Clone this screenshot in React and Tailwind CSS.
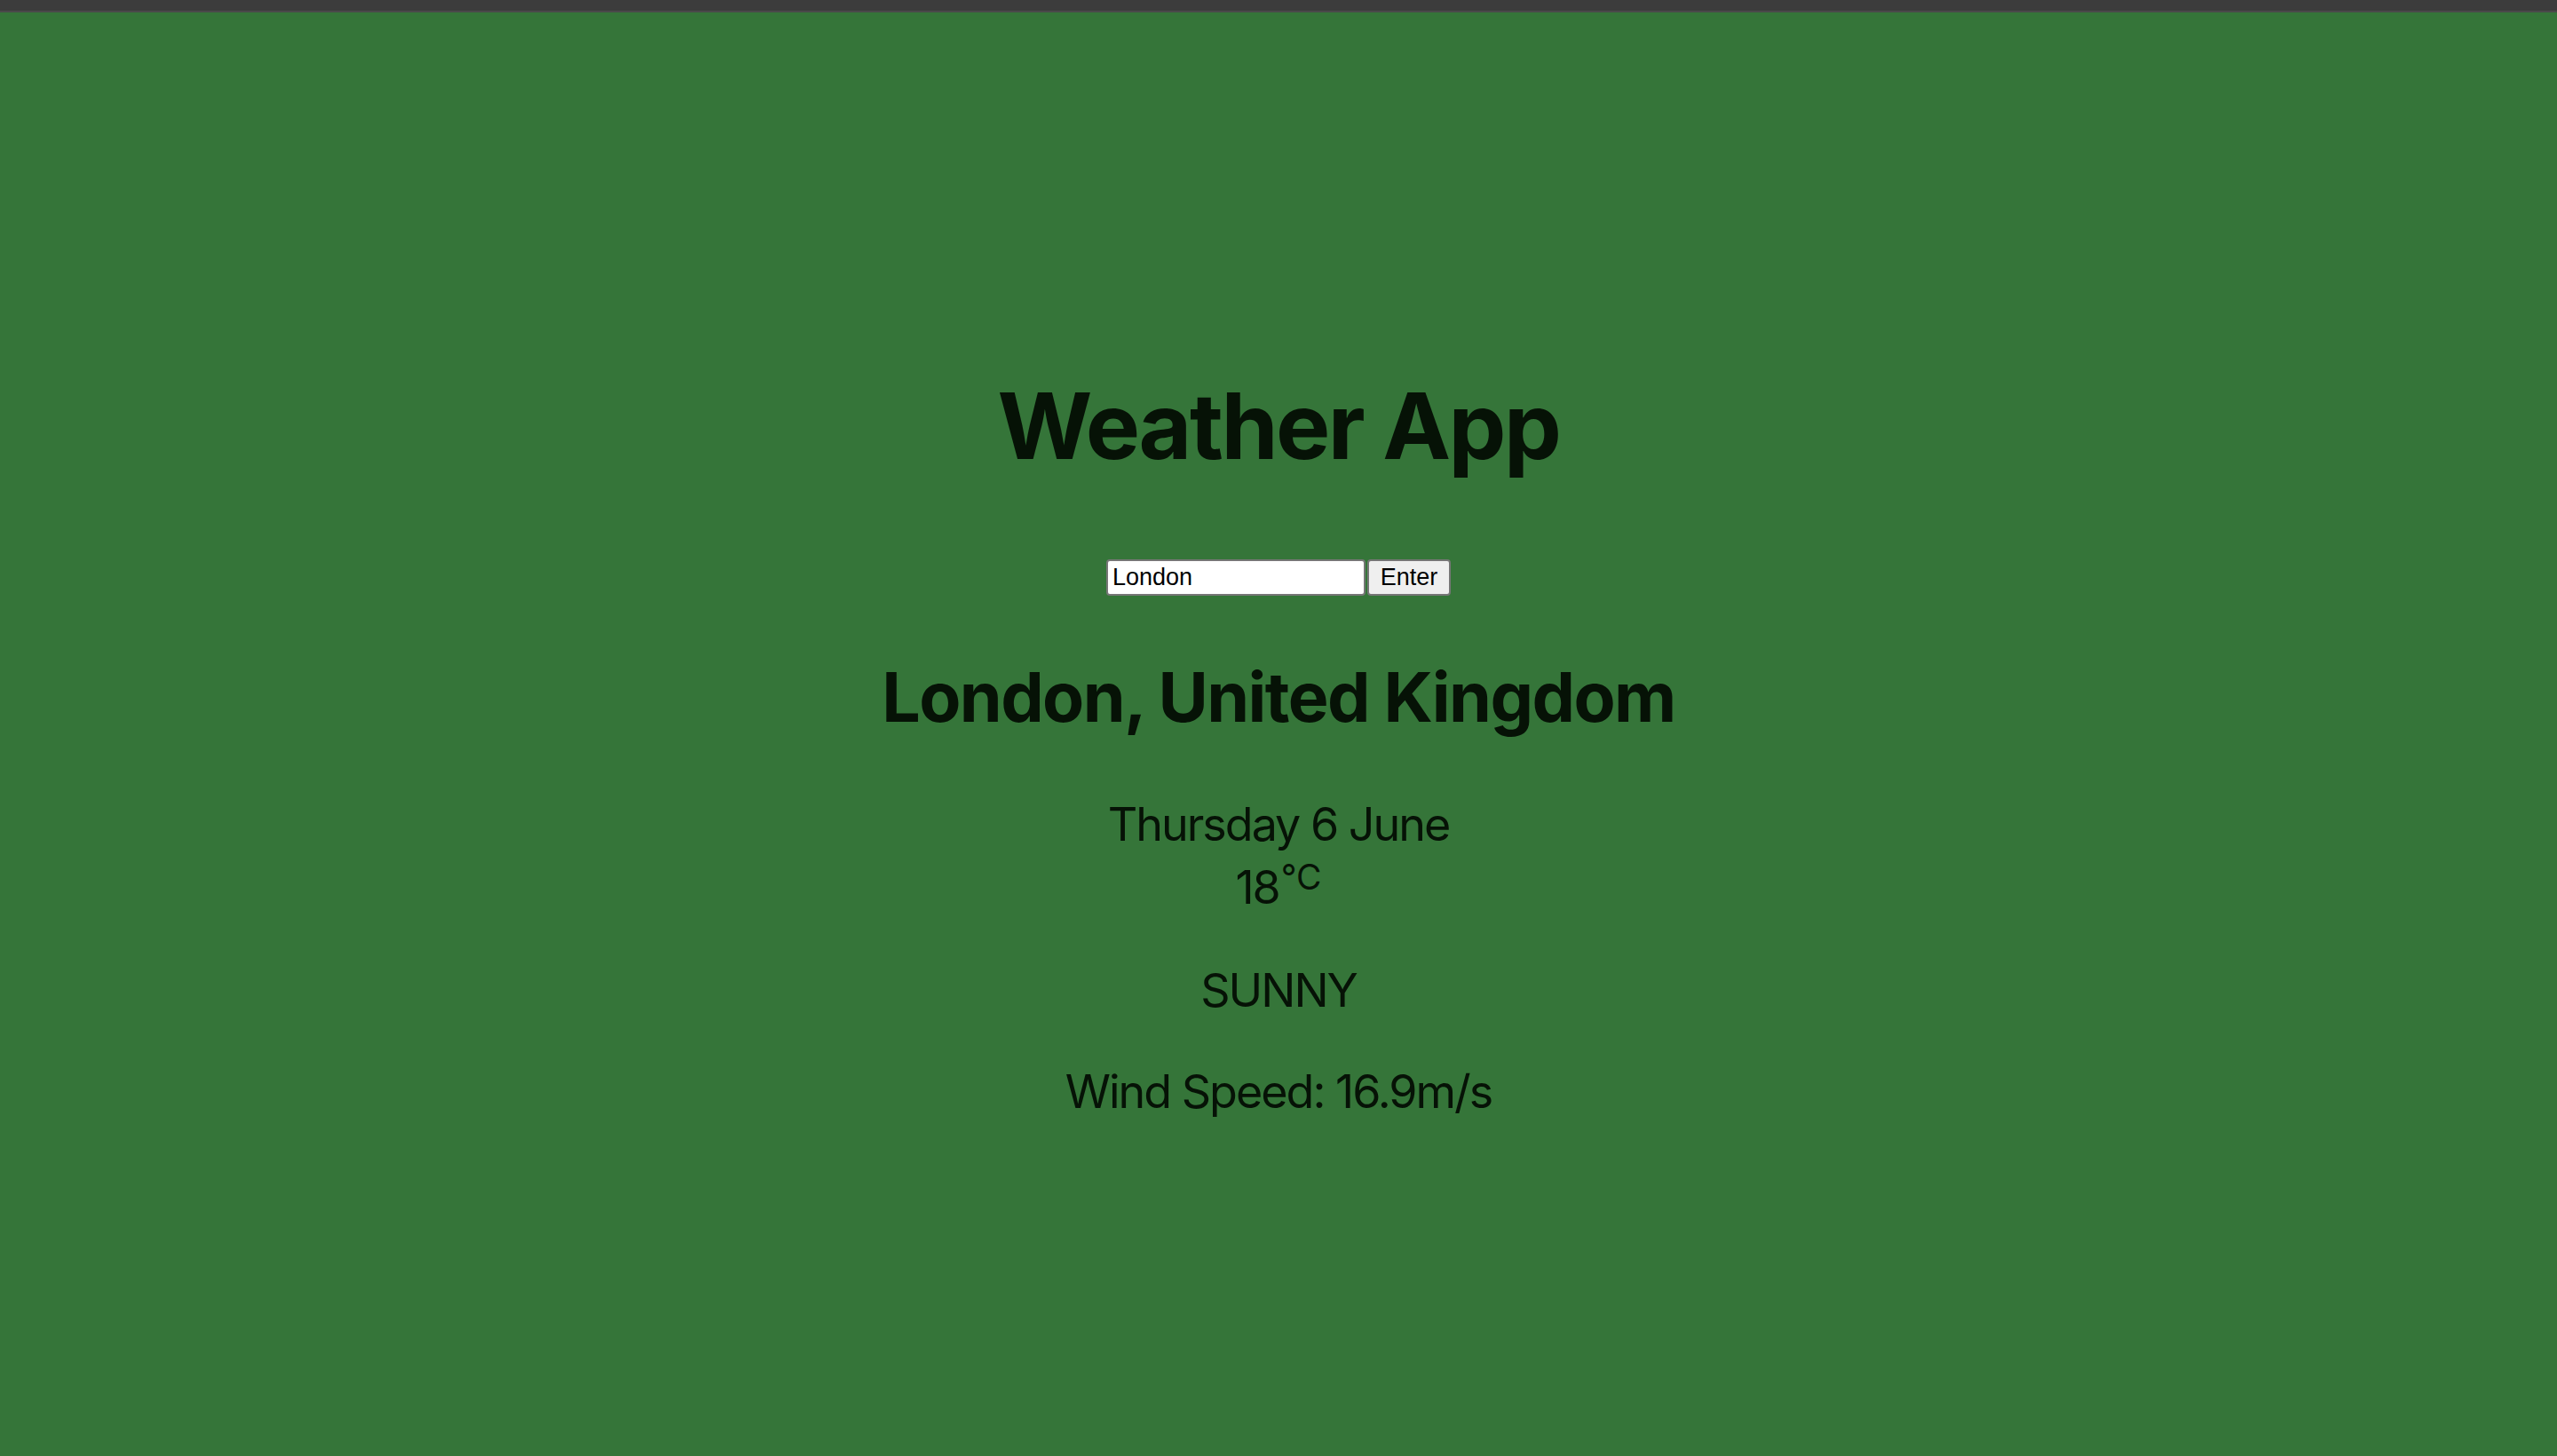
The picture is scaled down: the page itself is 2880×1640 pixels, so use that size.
export default function App() {
  return (
    <div className="min-h-[1640px] w-full flex flex-col bg-[#357539] text-[#061206] font-['Inter','Noto_Sans',sans-serif]">
      <div className="h-[12px] w-full bg-[#3c3c3c]" />
      <div className="h-[2px] w-full bg-[#4a4a4a]" />
      <main className="flex flex-col items-center">
        <h1 className="mt-[414px] text-[103px] leading-none font-bold tracking-[-2.5px]">Weather App</h1>
        <div className="mt-[99px] flex items-center gap-[2px] font-['Liberation_Sans','Arial',sans-serif] text-black">
          <input
            type="text"
            defaultValue="London"
            className="w-[292px] h-[41px] bg-white border-2 border-[#767676] rounded-[4px] px-[5px] text-[27px] leading-none text-black outline-none"
          />
          <button className="w-[94px] h-[41px] bg-[#efefef] border-2 border-[#767676] rounded-[4px] text-[27px] leading-none text-black">
            Enter
          </button>
        </div>
        <h2 className="mt-[76px] text-[77px] leading-none font-bold tracking-[-1.6px]">London, United Kingdom</h2>
        <p className="mt-[70px] text-[52px] leading-[70px] tracking-[-2px]">Thursday 6 June</p>
        <p className="mt-[1px] text-[52px] leading-[70px] tracking-[-2px]">
          18<span className="relative -top-[16px] ml-[2px] text-[39px] leading-none align-baseline tracking-[0px]">°C</span>
        </p>
        <p className="mt-[46px] text-[52px] leading-[70px] tracking-[-2px]">SUNNY</p>
        <p className="mt-[44px] text-[52px] leading-[70px] tracking-[-2px]">Wind Speed: 16.9m/s</p>
      </main>
    </div>
  );
}
